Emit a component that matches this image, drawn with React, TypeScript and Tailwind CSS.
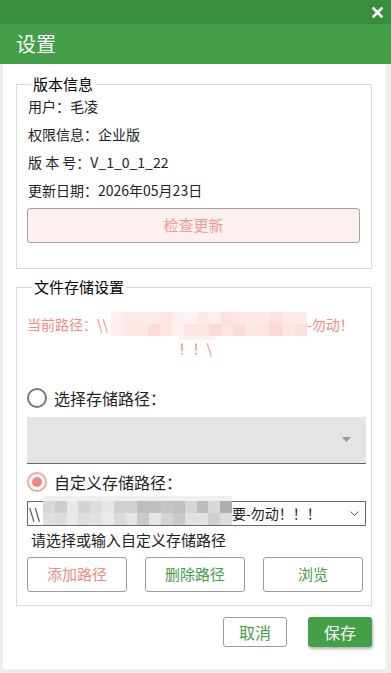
const pathTop = [
  '#fff0f0', '#ffe9e9', '#ffeaea', '#ffeaea', '#ffe4e4', '#ffeeee', '#fff4f4', '#ffe8e8',
  '#ffeeee', '#ffe0e0', '#ffe6e6', '#ffe6e6', '#ffe8e8', '#ffe0e0', '#ffeaea', '#ffeaea',
];
const pathBottom = [
  '#ffeeee', '#ffe8e8', '#ffe8e8', '#ffdcdc', '#ffe6e6', '#fff0f0', '#ffe2e2', '#ffe4e4',
  '#ffd8d8', '#ffe4e4', '#ffdcdc', '#ffe6e6', '#ffe2e2', '#ffd6d6', '#ffe6e6', '#ffdede',
];
const inputTop = [
  '#d8d8d8', '#cdcdcd', '#e8e8e8', '#d4d4d4', '#dcdcdc', '#e6e6e6', '#d0d0d0', '#cfd2cf',
  '#bdbdbd', '#bfbfbf', '#c4c4c4', '#c0c0c0', '#d5d5d5', '#bbbbbb', '#d8d8d8', '#aeaeae',
];
const inputBottom = [
  '#e0e0e0', '#dcdcdc', '#e9e9ec', '#dedede', '#e2e2e2', '#e9e9e9', '#dadada', '#e4e4e4',
  '#cacaca', '#e6e6e6', '#d3d3d3', '#c9c9c9', '#e0e0e0', '#e2e2e2', '#d0d0d0', '#dcdcdc',
];

// 打码的色块
const Mosaic = ({ rows, className }: { rows: string[][]; className: string }) => (
  <div className={`flex flex-col ${className}`}>
    {rows.map((row, r) => (
      <div key={r} className="flex h-[12px]">
        {row.map((c, i) => (
          <div key={i} className="flex-1" style={{ background: c }} />
        ))}
      </div>
    ))}
  </div>
);

const InfoRow = ({ label, value }: { label: string; value: string }) => (
  <div className="pl-px text-[14px] leading-[28px] text-[#222]">
    {label}
    {value}
  </div>
);

export default function App() {
  return (
    <div className="flex h-[673px] w-[391px] flex-col bg-white font-['Noto_Sans_CJK_SC',sans-serif]">
      <div className="flex h-6 items-center justify-end bg-[#388e3c] pr-[8px]">
        <svg width="11" height="11" viewBox="0 0 11 11">
          <path d="M1.5 1.5 L9.5 9.5 M9.5 1.5 L1.5 9.5" stroke="#fff" strokeWidth="2.6" strokeLinecap="square" />
        </svg>
      </div>
      <div className="flex h-10 items-center bg-[#43a047] pl-[16px] text-[20px] text-white">设置</div>

      <div className="flex flex-1 flex-col border-b-[4px] border-l-[3px] border-r-[5px] border-[#ededed] pl-[13px] pr-[14px] pt-[12px]">
        <fieldset className="border border-[#dadada] pb-[25px] pl-[10px] pr-[11px]">
          <legend className="ml-[4px] px-[2px] text-[15px] leading-[16px] text-black">版本信息</legend>
          <InfoRow label="用户：" value="毛凌" />
          <InfoRow label="权限信息：" value="企业版" />
          <InfoRow label="版 本 号：" value="V_1_0_1_22" />
          <InfoRow label="更新日期：" value="2026年05月23日" />
          <button className="mt-[4px] flex h-[35px] w-full items-center justify-center rounded-[3px] border border-[#a8a0a0] bg-[#fff0f0] text-[15px] text-[#f59a90]">
            检查更新
          </button>
        </fieldset>

        <fieldset className="mt-[10px] border border-[#dadada] pb-[13px] pl-[10px] pr-[5px]">
          <legend className="ml-[5px] px-[2px] text-[15px] leading-[16px] text-black">文件存储设置</legend>
          <div className="mt-[17px] flex h-[24px] items-center text-[14px] text-[#f48a80]">
            <span>当前路径：\\</span>
            <Mosaic rows={[pathTop, pathBottom]} className="ml-[3px] w-[196px]" />
            <span>-勿动！</span>
          </div>
          <div className="flex h-[24px] justify-center text-[14px] leading-[24px] text-[#f48a80]">
            <div>
              <div className="h-[4px] w-[36px] bg-[#fff0f0]" />
              <span className="-mt-[4px] block">！！\</span>
            </div>
          </div>

          <div className="mt-[28px] flex h-[20px] items-center gap-[7px]">
            <div className="h-[20px] w-[20px] rounded-full border-2 border-[#777]" />
            <span className="text-[16px] text-[#222]">选择存储路径：</span>
          </div>
          <div className="mt-[9px] flex h-[47px] items-center justify-end border-b border-[#666] bg-[#e4e4e4] pr-[15px]">
            <svg width="9" height="6" viewBox="0 0 9 6">
              <path d="M0 0 H9 L4.5 5 Z" fill="#9a9a9a" />
            </svg>
          </div>

          <div className="mt-[8px] flex h-[20px] items-center gap-[7px]">
            <div className="flex h-[20px] w-[20px] items-center justify-center rounded-full border-2 border-[#f8a49c]">
              <div className="h-[10px] w-[10px] rounded-full bg-[#f4877e]" />
            </div>
            <span className="text-[16px] text-[#222]">自定义存储路径：</span>
          </div>
          <div className="mt-[9px] flex h-[25px] items-start border border-[#6a6a6a] bg-white pl-[1px] pr-[6px]">
            <span className="text-[14px] leading-[23px] text-[#222]">\\</span>
            <div className="-mt-[6px] ml-[3px] flex w-[189px] flex-col">
              <div className="h-[5px] bg-[#efefef]" />
              <Mosaic rows={[inputTop, inputBottom]} className="w-full" />
            </div>
            <span className="text-[14px] leading-[23px] text-[#222]">要-勿动！！！</span>
            <svg className="ml-auto mt-[9px]" width="9" height="6" viewBox="0 0 9 6">
              <path d="M0.5 0.5 L4.5 4.5 L8.5 0.5" fill="none" stroke="#555" strokeWidth="1" />
            </svg>
          </div>
          <div className="mt-[4px] pl-[4px] text-[15px] leading-[20px] text-[#222]">请选择或输入自定义存储路径</div>

          <div className="mt-[7px] flex gap-[18px]">
            <button className="h-[35px] w-[100px] rounded-[3px] border border-[#9a9a9a] text-[15px] text-[#f48a80]">添加路径</button>
            <button className="h-[35px] w-[100px] rounded-[3px] border border-[#9a9a9a] text-[15px] text-[#43a047]">删除路径</button>
            <button className="h-[35px] w-[100px] rounded-[3px] border border-[#9a9a9a] text-[15px] text-[#43a047]">浏览</button>
          </div>
        </fieldset>

        <div className="mt-[11px] flex justify-end gap-[21px]">
          <button className="h-[30px] w-[64px] rounded-[3px] border border-[#999] text-[16px] text-[#43a047]">取消</button>
          <button className="h-[30px] w-[64px] rounded-[3px] bg-[#43a047] text-[16px] text-white shadow-[1px_2px_3px_rgba(0,0,0,0.3)]">保存</button>
        </div>
      </div>
    </div>
  );
}
